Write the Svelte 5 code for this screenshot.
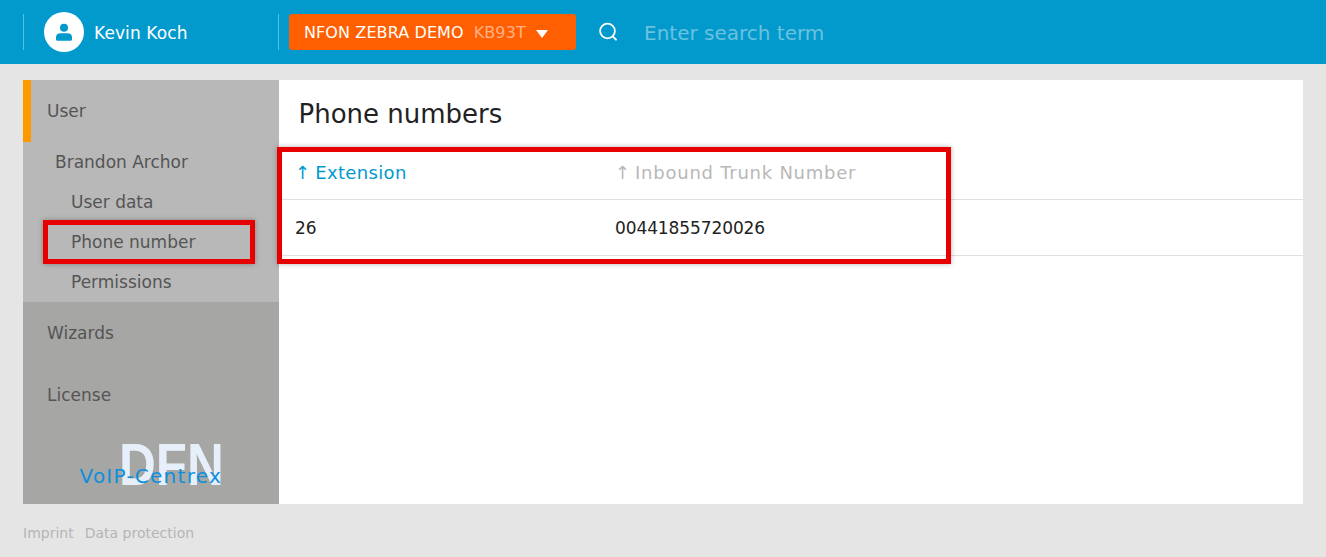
<script>
	const subItems = ['User data', 'Phone number', 'Permissions'];
</script>

<div class="page">
	<header class="topbar">
		<div class="user">
			<span class="avatar">
				<svg viewBox="0 0 24 24" width="24" height="24" aria-hidden="true">
					<circle cx="12" cy="7.7" r="4" fill="#029acd" />
					<path d="M4 19.5V17c0-2.2 2-3.7 4-3.7h8c2 0 4 1.5 4 3.7v2.5c0 .7-.5 1.2-1.2 1.2H5.2c-.7 0-1.2-.5-1.2-1.2z" fill="#029acd" />
				</svg>
			</span>
			<span class="user-name">Kevin Koch</span>
		</div>
		<button class="tenant">
			<span>NFON ZEBRA DEMO</span>
			<span class="tenant-code">KB93T</span>
			<span class="caret"></span>
		</button>
		<svg class="search-icon" viewBox="0 0 20 20" width="20" height="20" aria-hidden="true">
			<circle cx="9.5" cy="9" r="7.4" fill="none" stroke="#fff" stroke-width="1.8" />
			<path d="M15 14.6l3 3" stroke="#fff" stroke-width="2" stroke-linecap="round" />
		</svg>
		<span class="search-text">Enter search term</span>
	</header>

	<div class="content">
		<nav class="sidebar">
			<div class="open-group">
				<div class="nav-top active">User</div>
				<div class="person">Brandon Archor</div>
				{#each subItems as item}
					<div class="sub">{item}</div>
				{/each}
			</div>
			<div class="rest">
				<div class="nav-top">Wizards</div>
				<div class="nav-top">License</div>
				<div class="logo">
					<span class="logo-dfn">DFN</span>
					<span class="logo-voip">VoIP-Centrex</span>
				</div>
			</div>
		</nav>

		<main class="main">
			<h1>Phone numbers</h1>
			<div class="row head">
				<div class="col-a sorted"><span class="arrow">↑</span> Extension</div>
				<div class="col-b"><span class="arrow">↑</span> Inbound Trunk Number</div>
			</div>
			<div class="row data">
				<div class="col-a">26</div>
				<div class="col-b">00441855720026</div>
			</div>
		</main>
	</div>

	<footer class="footer">
		<span>Imprint</span>
		<span>Data protection</span>
	</footer>

	<div class="mark mark-nav"></div>
	<div class="mark mark-table"></div>
</div>

<style>
	:global(body) {
		margin: 0;
		background: #e5e5e5;
	}

	.page {
		position: relative;
		height: 557px;
		overflow: hidden;
		font-family: 'DejaVu Sans', sans-serif;
		font-size: 17px;
		color: #222;
		background: #e5e5e5;
	}

	.topbar {
		display: flex;
		align-items: center;
		height: 64px;
		background: #029acd;
		padding-left: 23px;
		box-sizing: border-box;
	}

	.user {
		display: flex;
		align-items: center;
		width: 256px;
		height: 36px;
		box-sizing: border-box;
		padding-left: 20px;
		border-left: 1px solid #5cbcdc;
		border-right: 1px solid #5cbcdc;
	}

	.avatar {
		display: flex;
		align-items: center;
		justify-content: center;
		width: 40px;
		height: 40px;
		border-radius: 50%;
		background: #fff;
		margin-right: 10px;
	}

	.user-name {
		color: #fff;
		font-size: 17px;
		letter-spacing: 0.1px;
		padding-top: 2px;
	}

	.tenant {
		display: flex;
		align-items: center;
		height: 36px;
		width: 287px;
		margin-left: 10px;
		padding: 0 0 0 15px;
		border: 0;
		border-radius: 3px;
		background: #ff5f00;
		color: #fff;
		font-family: inherit;
		font-size: 16px;
		letter-spacing: 0.1px;
		white-space: nowrap;
	}

	.tenant-code {
		margin-left: 10px;
		color: #ffb084;
	}

	.caret {
		width: 0;
		height: 0;
		margin-left: 10px;
		margin-top: 3px;
		border-left: 6.5px solid transparent;
		border-right: 6.5px solid transparent;
		border-top: 8px solid #fff;
	}

	.search-icon {
		margin-left: 22px;
	}

	.search-text {
		margin-left: 26px;
		font-size: 20px;
		padding-top: 2px;
		color: #6cc1de;
	}

	.content {
		display: flex;
		margin: 16px 23px 0;
		height: 424px;
	}

	.sidebar {
		display: flex;
		flex-direction: column;
		width: 256px;
		color: #555;
	}

	.open-group {
		background: #b8b8b8;
		height: 222px;
	}

	.rest {
		flex: 1;
		display: flex;
		flex-direction: column;
		background: #a6a6a4;
	}

	.nav-top {
		height: 62px;
		line-height: 62px;
		padding-left: 24px;
	}

	.active {
		border-left: 8px solid #ff9900;
		padding-left: 16px;
	}

	.person {
		height: 40px;
		line-height: 40px;
		padding-left: 32px;
	}

	.sub {
		height: 40px;
		line-height: 40px;
		padding-left: 48px;
	}

	.logo {
		position: relative;
		flex: 1;
	}

	.logo-dfn {
		position: absolute;
		left: 96px;
		top: 9px;
		font-family: 'Liberation Sans', sans-serif;
		font-size: 60px;
		line-height: 60px;
		font-weight: 700;
		color: #e6effa;
		transform: scaleX(0.85);
		transform-origin: left center;
	}

	.logo-voip {
		position: absolute;
		left: 56.5px;
		top: 38px;
		font-size: 20px;
		letter-spacing: 1.25px;
		color: #0c8fdc;
		white-space: nowrap;
	}

	.main {
		flex: 1;
		background: #fff;
	}

	h1 {
		margin: 0;
		height: 64px;
		line-height: 68px;
		padding-left: 19.5px;
		font-size: 26px;
		font-weight: 400;
		color: #222;
	}

	.row {
		display: flex;
		align-items: center;
		height: 56px;
		padding-left: 16px;
		border-bottom: 1px solid #e0e0e0;
		box-sizing: border-box;
		letter-spacing: -0.1px;
	}

	.col-a {
		width: 320px;
	}

	.head {
		color: #b8b8b8;
		font-size: 18px;
		letter-spacing: 0.75px;
	}

	.head > div {
		padding-top: 2px;
	}

	.head .sorted {
		color: #029acd;
		letter-spacing: 0.35px;
	}

	.head .arrow {
		letter-spacing: 0;
		margin-right: -1.5px;
	}

	.head .sorted .arrow {
		margin-right: -1px;
	}

	.mark {
		position: absolute;
		box-sizing: border-box;
		border: 5px solid #e60000;
		box-shadow: 0 0 5px rgba(0, 0, 0, 0.3);
	}

	.mark-nav {
		left: 43px;
		top: 220px;
		width: 212px;
		height: 44px;
	}

	.mark-table {
		left: 277px;
		top: 147px;
		width: 674px;
		height: 117px;
	}

	.footer {
		display: flex;
		gap: 11px;
		margin: 21px 23px 0;
		font-size: 14px;
		color: #b5b5b5;
	}
</style>
